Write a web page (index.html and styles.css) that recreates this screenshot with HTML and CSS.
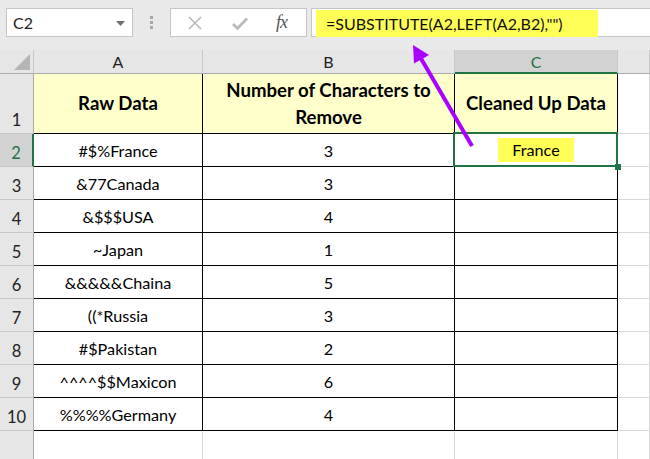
FILE: index.html
```html
<!DOCTYPE html>
<html>
<head>
<meta charset="utf-8">
<link rel="stylesheet" href="styles.css">
</head>
<body>
<div class="app">
  <div class="toolbar">
    <div class="namebox">
      <span class="ref">C2</span>
      <svg class="dd" width="9" height="5" viewBox="0 0 9 5"><path d="M0 0H9L4.5 5Z" fill="#6f6f6f"/></svg>
    </div>
    <div class="grip"><i></i><i></i><i></i></div>
    <div class="fxbox">
      <svg class="btn-x" width="14" height="14" viewBox="0 0 14 14"><path d="M1 1L13 13M13 1L1 13" stroke="#b9b9b9" stroke-width="1.6" fill="none"/></svg>
      <svg class="btn-ok" width="16" height="13" viewBox="0 0 16 13"><path d="M1 7L5.5 11.5L15 1.5" stroke="#b9b9b9" stroke-width="2.6" fill="none"/></svg>
      <span class="fx">fx</span>
    </div>
    <div class="formula"><span class="hl">=SUBSTITUTE(A2,LEFT(A2,B2),"")</span></div>
  </div>

  <div class="sheet">
    <div class="corner"><svg width="16" height="16" viewBox="0 0 16 16"><path d="M16 0V16H0Z" fill="#b5b5b5"/></svg></div>
    <div class="ch">A</div>
    <div class="ch">B</div>
    <div class="ch sel">C</div>
    <div class="ch"></div>

    <div class="rh">1</div>
    <div class="c hd">Raw Data</div>
    <div class="c hd">Number of Characters to<br>Remove</div>
    <div class="c hd">Cleaned Up Data</div>
    <div class="e"></div>

    <div class="rh sel">2</div>
    <div class="c">#$%France</div>
    <div class="c">3</div>
    <div class="c active"><span class="hl-cell">France</span></div>
    <div class="e"></div>

    <div class="rh">3</div>
    <div class="c">&amp;77Canada</div>
    <div class="c">3</div>
    <div class="c"></div>
    <div class="e"></div>

    <div class="rh">4</div>
    <div class="c">&amp;$$$USA</div>
    <div class="c">4</div>
    <div class="c"></div>
    <div class="e"></div>

    <div class="rh">5</div>
    <div class="c">~Japan</div>
    <div class="c">1</div>
    <div class="c"></div>
    <div class="e"></div>

    <div class="rh">6</div>
    <div class="c">&amp;&amp;&amp;&amp;&amp;Chaina</div>
    <div class="c">5</div>
    <div class="c"></div>
    <div class="e"></div>

    <div class="rh">7</div>
    <div class="c">((*Russia</div>
    <div class="c">3</div>
    <div class="c"></div>
    <div class="e"></div>

    <div class="rh">8</div>
    <div class="c">#$Pakistan</div>
    <div class="c">2</div>
    <div class="c"></div>
    <div class="e"></div>

    <div class="rh">9</div>
    <div class="c">^^^^$$Maxicon</div>
    <div class="c">6</div>
    <div class="c"></div>
    <div class="e"></div>

    <div class="rh">10</div>
    <div class="c">%%%%Germany</div>
    <div class="c">4</div>
    <div class="c"></div>
    <div class="e"></div>

    <div class="rh last"></div>
    <div class="e last"></div>
    <div class="e last"></div>
    <div class="e last"></div>
    <div class="e last"></div>
  </div>

  <svg class="arrow" width="650" height="459" viewBox="0 0 650 459">
    <line x1="472" y1="146" x2="421" y2="58.5" stroke="#aa00ff" stroke-width="4"/>
    <path d="M413 45L429 55L414 63.5Z" fill="#aa00ff"/>
  </svg>
</div>
</body>
</html>
```

FILE: styles.css
```css
html, body {
  margin: 0;
  padding: 0;
}
body {
  width: 650px;
  height: 459px;
  overflow: hidden;
  background: #ffffff;
  font-family: Lato, "Liberation Sans", sans-serif;
  color: #000;
}
.app {
  position: relative;
  width: 650px;
  height: 459px;
}
.toolbar {
  box-sizing: border-box;
  height: 50px;
  background: #e9e9e9;
  display: flex;
  align-items: flex-start;
  padding: 8px 0 0 6px;
}
.namebox {
  box-sizing: border-box;
  width: 127px;
  height: 29px;
  background: #fff;
  border: 1px solid #c6c6c6;
  display: flex;
  align-items: center;
  justify-content: space-between;
  padding: 0 7px 0 6px;
}
.ref {
  font-size: 16px;
  color: #222;
}
.dd {
  margin-top: 1px;
}
.grip {
  width: 37px;
  height: 29px;
  display: flex;
  flex-direction: column;
  align-items: center;
  justify-content: center;
  gap: 2px;
}
.grip i {
  display: block;
  width: 3px;
  height: 3px;
  background: #a8a8a8;
}
.fxbox {
  box-sizing: border-box;
  width: 137px;
  height: 29px;
  background: #fff;
  border: 1px solid #c6c6c6;
  display: flex;
  align-items: center;
  padding-left: 17px;
}
.btn-x {
  margin-right: 30px;
}
.btn-ok {
  margin-right: 28px;
  margin-top: 2px;
}
.fx {
  font-family: "Liberation Serif", serif;
  font-style: italic;
  font-size: 18px;
  color: #555;
  letter-spacing: -1px;
}
.formula {
  box-sizing: border-box;
  flex: 1;
  height: 29px;
  margin-left: 4px;
  background: #fff;
  border: 1px solid #c6c6c6;
  border-right: none;
  padding: 1px 0 0 4px;
}
.hl {
  display: inline-block;
  box-sizing: border-box;
  width: 282px;
  height: 27px;
  line-height: 27px;
  padding-left: 10px;
  background: #ffff57;
  font-size: 16px;
  color: #111;
}
.sheet {
  display: grid;
  grid-template-columns: 34px 169px 252px 163px 1fr;
  grid-template-rows: 24px 60px repeat(9, 33px) 1fr;
  height: 409px;
}
.sheet > div {
  box-sizing: border-box;
}
.corner {
  background: #e6e6e6;
  border-right: 1px solid #c8c8c8;
  border-bottom: 1px solid #ababab;
  display: flex;
  align-items: flex-end;
  justify-content: flex-end;
  padding: 0 3px 3px 0;
}
.ch {
  background: #e6e6e6;
  border-right: 1px solid #c8c8c8;
  border-bottom: 1px solid #ababab;
  display: flex;
  align-items: center;
  justify-content: center;
  font-size: 16px;
  color: #222;
}
.ch.sel {
  background: #d2d2d2;
  color: #217346;
  border-bottom: 2px solid #217346;
}
.rh {
  background: #e6e6e6;
  border-right: 1px solid #ababab;
  border-bottom: 1px solid #c8c8c8;
  display: flex;
  align-items: flex-end;
  justify-content: center;
  padding-bottom: 3px;
  font-size: 16.5px;
  color: #222;
}
.rh.sel {
  background: #d2d2d2;
  color: #217346;
  border-right: 2px solid #217346;
}
.rh.last {
  border-bottom: none;
}
.c {
  border-right: 1px solid #000;
  border-bottom: 1px solid #000;
  display: flex;
  align-items: center;
  justify-content: center;
  text-align: center;
  font-size: 16.2px;
  line-height: 27px;
}
.c.hd {
  background: #ffffcc;
  font-weight: bold;
  font-size: 18.6px;
}
.e {
  border-right: 1px solid #d9d9d9;
  border-bottom: 1px solid #d9d9d9;
}
.e.last {
  border-bottom: none;
}
.c.active {
  position: relative;
}
.c.active::after {
  content: "";
  position: absolute;
  top: -2px;
  left: -2px;
  right: -1px;
  bottom: -1px;
  border: 2px solid #217346;
}
.c.active::before {
  content: "";
  position: absolute;
  right: -4px;
  bottom: -4px;
  width: 6px;
  height: 6px;
  background: #217346;
  z-index: 1;
}
.hl-cell {
  display: inline-block;
  padding: 0 14px;
  height: 24px;
  line-height: 24px;
  background: #ffff57;
  margin-bottom: 1px;
}
.arrow {
  position: absolute;
  left: 0;
  top: 0;
  pointer-events: none;
}
```
